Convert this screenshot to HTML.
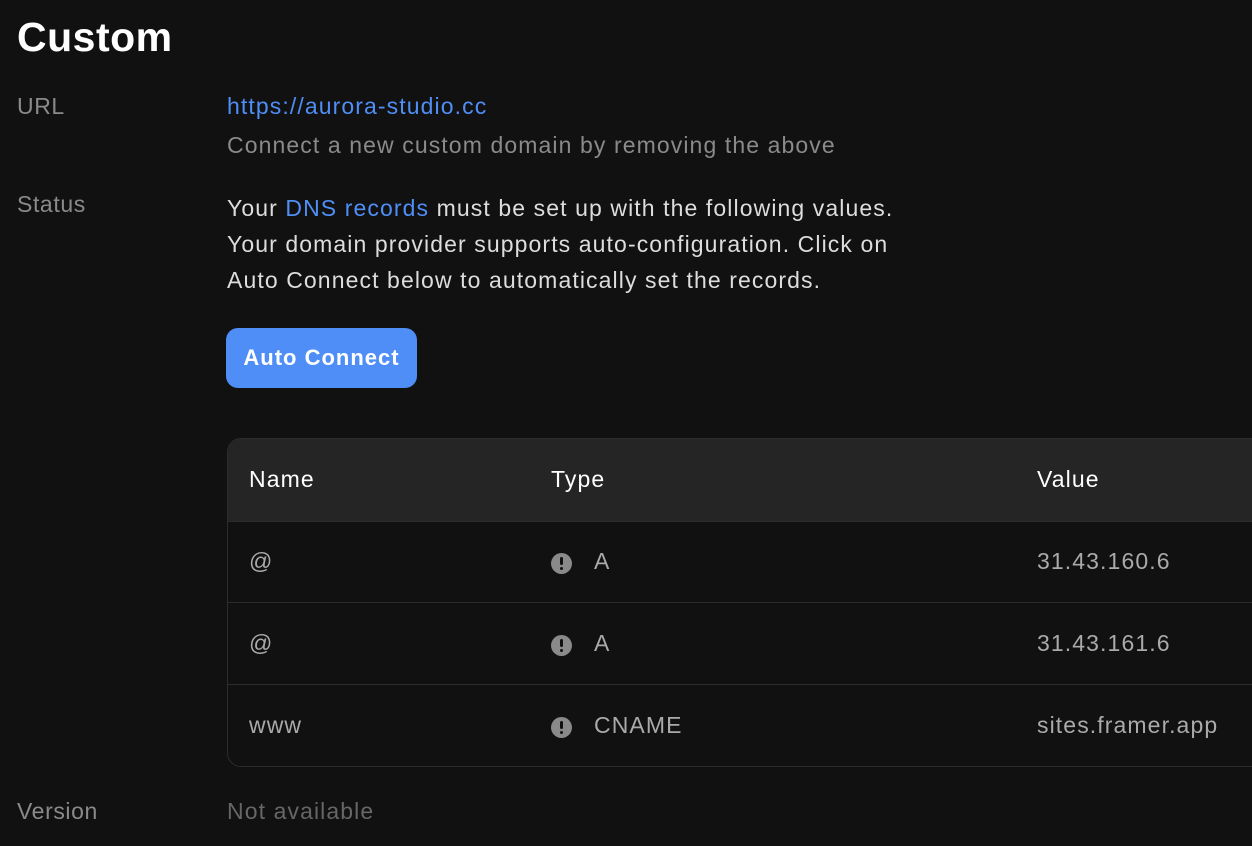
<!DOCTYPE html>
<html><head><style>
body{margin:0;width:1252px;height:846px;background:#111;font-family:"Liberation Sans",sans-serif;overflow:hidden;position:relative;color:#ddd}
.a{position:absolute;white-space:nowrap}
.lbl{color:#8a8a8a;font-size:23px;letter-spacing:0.6px}
.t{font-size:23px;letter-spacing:1.1px}
.blue{color:#4f8ef7}
.tbl{position:absolute;left:227px;top:438px;width:1060px;height:327px;border:1px solid #2c2c2c;border-radius:14px;overflow:hidden}
.hd{position:absolute;left:0;top:0;right:0;height:82px;background:#252525}
.row{position:absolute;left:0;right:0;height:82px;border-top:1px solid #2c2c2c}
.ic{position:absolute;width:21px;height:21px;border-radius:50%;background:#8a8a8a}
.ic:before{content:"";position:absolute;left:9px;top:4px;width:3px;height:8px;background:#111;border-radius:2px}
.ic:after{content:"";position:absolute;left:9px;top:14px;width:3px;height:3px;background:#111;border-radius:50%}
</style></head><body>
<div class="a" style="left:17px;top:14px;font-size:41px;font-weight:bold;color:#fff;letter-spacing:0.5px">Custom</div>
<div class="a lbl" style="left:17px;top:93px">URL</div>
<div class="a t blue" style="left:227px;top:93px">https://aurora-studio.cc</div>
<div class="a t" style="left:227px;top:132px;color:#8a8a8a">Connect a new custom domain by removing the above</div>
<div class="a lbl" style="left:17px;top:191px">Status</div>
<div class="a t" style="left:227px;top:190px;line-height:36px">Your <span class="blue">DNS records</span> must be set up with the following values.<br>Your domain provider supports auto-configuration. Click on<br>Auto Connect below to automatically set the records.</div>
<div class="a" style="left:226px;top:328px;width:191px;height:60px;background:#4f8ef7;border-radius:12px;color:#fff;font-size:22px;font-weight:bold;text-align:center;line-height:60px;letter-spacing:1px">Auto Connect</div>
<div class="tbl">
<div class="hd"></div>
<div class="a t" style="left:21px;top:27px;color:#fff">Name</div>
<div class="a t" style="left:323px;top:27px;color:#fff">Type</div>
<div class="a t" style="left:809px;top:27px;color:#fff">Value</div>
<div class="row" style="top:82px"></div>
<div class="row" style="top:163px"></div>
<div class="row" style="top:245px"></div>
<div class="a t" style="left:21px;top:109px;color:#aaa">@</div>
<div class="ic" style="left:323px;top:114px"></div>
<div class="a t" style="left:366px;top:109px;color:#aaa">A</div>
<div class="a t" style="left:809px;top:109px;color:#aaa">31.43.160.6</div>
<div class="a t" style="left:21px;top:191px;color:#aaa">@</div>
<div class="ic" style="left:323px;top:196px"></div>
<div class="a t" style="left:366px;top:191px;color:#aaa">A</div>
<div class="a t" style="left:809px;top:191px;color:#aaa">31.43.161.6</div>
<div class="a t" style="left:21px;top:273px;color:#aaa">www</div>
<div class="ic" style="left:323px;top:278px"></div>
<div class="a t" style="left:366px;top:273px;color:#aaa">CNAME</div>
<div class="a t" style="left:809px;top:273px;color:#aaa">sites.framer.app</div>
</div>
<div class="a lbl" style="left:17px;top:798px">Version</div>
<div class="a t" style="left:227px;top:798px;color:#666">Not available</div>
</body></html>
